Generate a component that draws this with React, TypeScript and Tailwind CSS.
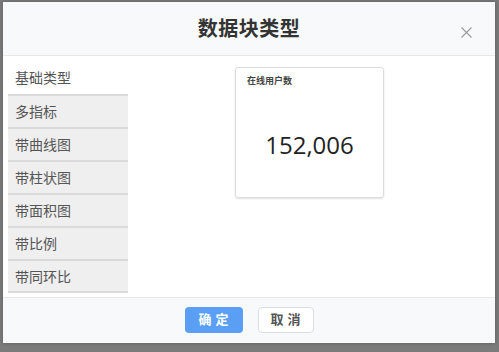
import React from "react";

const menu = ["多指标", "带曲线图", "带柱状图", "带面积图", "带比例", "带同环比"];

export default function App() {
  return (
    <div
      className="w-[499px] h-[352px] bg-[#7b7b7b] overflow-hidden pt-[2px] pl-[3px]"
      style={{ fontFamily: '"Noto Sans", "Noto Sans CJK SC", sans-serif' }}
    >
      <div className="w-[492px] h-[341px] bg-white flex flex-col shadow-[0_0_4px_rgba(0,0,0,0.25)]">
        {/* header */}
        <div className="relative h-[54px] shrink-0 bg-[#f8f9fb] border-b border-[#e6e8eb] flex items-center justify-center">
          <div className="text-[20px] font-bold text-[#333] leading-none tracking-[0.5px]">数据块类型</div>
          <svg
            className="absolute right-[23px] top-[25px]"
            width="11"
            height="11"
            viewBox="0 0 11 11"
            fill="none"
            stroke="#9a9a9a"
            strokeWidth="1.1"
          >
            <path d="M0.5 0.5 L10.5 10.5 M10.5 0.5 L0.5 10.5" />
          </svg>
        </div>
        {/* body */}
        <div className="flex-1 flex pl-[5px] pt-[5px]">
          <div className="w-[120px] flex flex-col text-[14px] text-[#555]">
            <div className="h-[33px] flex items-center pl-[7px] bg-white">基础类型</div>
            {menu.map((m, i) => (
              <div
                key={m}
                className={
                  i === menu.length - 1
                    ? "h-[34px] flex items-center pl-[7px] bg-[#efefef] border-t-2 border-b-2 border-[#dadada]"
                    : "h-[33px] flex items-center pl-[7px] bg-[#efefef] border-t-2 border-[#dadada]"
                }
              >
                {m}
              </div>
            ))}
          </div>
          <div className="flex-1 flex justify-center pt-[6px] pr-[4px]">
            <div className="w-[149px] h-[131px] border border-[#dcdcdc] rounded-[3px] shadow-[0_1px_2px_rgba(0,0,0,0.12)] flex flex-col">
              <div className="pl-[11px] pt-[6px] text-[9px] font-bold text-[#444] leading-[14px]">在线用户数</div>
              <div
                className="flex-1 flex items-center justify-center pt-[4px] text-[24px] text-[#222]"
                style={{ fontFamily: '"Open Sans", sans-serif' }}
              >
                152,006
              </div>
            </div>
          </div>
        </div>
        {/* footer */}
        <div className="h-[46px] shrink-0 bg-[#f8f9fb] border-t border-[#e6e8eb] flex items-center justify-center gap-[15px] pb-[2px]">
          <div className="w-[58px] h-[26px] rounded-[4px] bg-[#5b9ff5] text-white text-[13px] font-bold flex items-center justify-center tracking-[4px] pl-[4px]">
            确定
          </div>
          <div className="w-[56px] h-[26px] rounded-[4px] bg-white border border-[#dcdfe6] text-[#555] text-[13px] font-bold flex items-center justify-center tracking-[4px] pl-[4px]">
            取消
          </div>
        </div>
      </div>
    </div>
  );
}
